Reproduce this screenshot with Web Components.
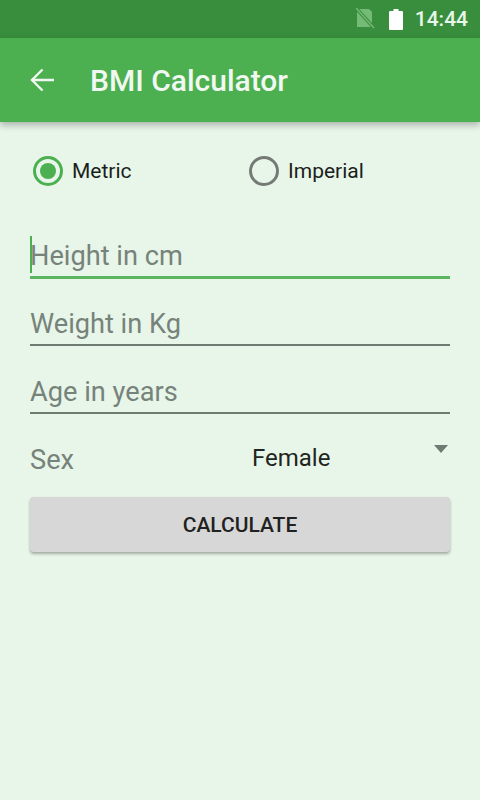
<!DOCTYPE html>
<html>
<head>
<meta charset="utf-8">
<style>
html, body { margin: 0; padding: 0; height: 800px; overflow: hidden; background: #e8f5e9; font-family: Roboto, sans-serif; }
</style>
</head>
<body>
<status-bar></status-bar>
<app-bar title="BMI Calculator"></app-bar>
<main-form>
  <unit-radios></unit-radios>
  <text-line hint="Height in cm" focused></text-line>
  <text-line hint="Weight in Kg"></text-line>
  <text-line hint="Age in years"></text-line>
  <sex-spinner></sex-spinner>
  <raised-button>CALCULATE</raised-button>
</main-form>

<script>
class StatusBar extends HTMLElement {
    constructor(){
        super();
        this.attachShadow({mode: "open"}).innerHTML = `
        <style>
        :host{
            display: flex;
            height: 38px;
            background: #388e3c;
            align-items: center;
            justify-content: flex-end;
            padding-right: 12px;
            box-sizing: border-box;
            color: #e8f5e9;
            font: 500 21px Roboto, sans-serif;
        }
        svg { display: block; }
        .sim { margin-right: 13px; }
        .bat { margin-right: 12px; }
        </style>
        <svg class="sim" width="20" height="22" viewBox="0 0 20 22">
            <path d="M1 1h12l3 3v15H1z" fill="#74bb78"/>
            <path d="M0 0l18 20" stroke="#388e3c" stroke-width="3.400"/>
            <path d="M0 0l18 20" stroke="#74bb78" stroke-width="1.500"/>
        </svg>
        <svg class="bat" width="14" height="22" viewBox="0 0 14 22">
            <path d="M4.500 1h5v2H13a1 1 0 0 1 1 1v17a1 1 0 0 1-1 1H1a1 1 0 0 1-1-1V4a1 1 0 0 1 1-1h3.500z" fill="#fff"/>
        </svg>
        <span>14:44</span>
        `;
    }
}

class AppBar extends HTMLElement {
    constructor(){
        super();
        this.attachShadow({mode: "open"}).innerHTML = `
        <style>
        :host{
            display: flex;
            position: relative;
            z-index: 1;
            height: 84px;
            background: #4caf50;
            align-items: center;
            color: #f1f8f1;
            box-shadow: 0 3px 7px rgba(0, 0, 0, 0.28);
        }
        svg { display: block; margin-left: 30px; margin-right: 36px; }
        h1 { margin: 0; font: 500 30px Roboto, sans-serif; }
        </style>
        <svg width="24" height="24" viewBox="0 0 24 24" fill="none" stroke="#f1f8f1" stroke-width="2.400">
            <path d="M24 12H2.500M12.500 1.500L2 12l10.500 10.500"/>
        </svg>
        <h1></h1>
        `;
    }

    connectedCallback() {
        this.shadowRoot.querySelector("h1").textContent = this.getAttribute("title");
    }
}

class MainForm extends HTMLElement {
    constructor(){
        super();
        this.attachShadow({mode: "open"}).innerHTML = `
        <style>
        :host{
            display: block;
            padding: 27px 30px 0;
        }
        </style>
        <slot></slot>
        `;
    }
}

class UnitRadios extends HTMLElement {
    constructor(){
        super();
        this.attachShadow({mode: "open"}).innerHTML = `
        <style>
        :host{
            display: grid;
            grid-template-columns: 216px 1fr;
            padding-left: 3px;
            height: 44px;
            margin-bottom: 42px;
            align-items: center;
            font: 400 21px Roboto, sans-serif;
            color: #1a1f1b;
        }
        .opt { display: flex; align-items: center; gap: 9px; }
        svg { display: block; }
        </style>
        <div class="opt">
            <svg width="30" height="30" viewBox="0 0 30 30">
                <circle cx="15" cy="15" r="13.500" fill="none" stroke="#4caf50" stroke-width="3"/>
                <circle cx="15" cy="15" r="8" fill="#4caf50"/>
            </svg>
            <span>Metric</span>
        </div>
        <div class="opt">
            <svg width="30" height="30" viewBox="0 0 30 30">
                <circle cx="15" cy="15" r="13.500" fill="none" stroke="#757a76" stroke-width="3"/>
            </svg>
            <span>Imperial</span>
        </div>
        `;
    }
}

class TextLine extends HTMLElement {
    constructor(){
        super();
        this.attachShadow({mode: "open"}).innerHTML = `
        <style>
        :host{
            display: block;
            position: relative;
            height: 41px;
            margin-bottom: 25px;
            border-bottom: 2px solid #6f7a72;
            box-sizing: content-box;
            font: 400 27.2px/42px Roboto, sans-serif;
            color: #76837a;
        }
        :host([focused]) {
            border-bottom: 3px solid #5cb660;
            margin-bottom: 24px;
        }
        .caret {
            display: none;
            position: absolute;
            left: 0;
            top: 1px;
            width: 2px;
            height: 37px;
            background: #4caf50;
        }
        :host([focused]) .caret { display: block; }
        </style>
        <span class="caret"></span><span class="hint"></span>
        `;
    }

    connectedCallback() {
        this.shadowRoot.querySelector(".hint").textContent = this.getAttribute("hint");
    }
}

class SexSpinner extends HTMLElement {
    constructor(){
        super();
        this.attachShadow({mode: "open"}).innerHTML = `
        <style>
        :host{
            display: grid;
            grid-template-columns: 222px 1fr auto;
            height: 42px;
            margin-top: -4px;
            font-family: Roboto, sans-serif;
        }
        .label { font-size: 27.2px; line-height: 42px; color: #76837a; padding-top: 4px; }
        .value { font-size: 24px; line-height: 42px; color: #1f2621; padding-top: 2px; }
        .arrow {
            width: 0;
            height: 0;
            margin: 10px 2px 0 0;
            border-left: 7px solid transparent;
            border-right: 7px solid transparent;
            border-top: 8px solid #6f7a72;
        }
        </style>
        <span class="label">Sex</span>
        <span class="value">Female</span>
        <span class="arrow"></span>
        `;
    }
}

class RaisedButton extends HTMLElement {
    constructor(){
        super();
        this.attachShadow({mode: "open"}).innerHTML = `
        <style>
        :host{
            display: flex;
            height: 55px;
            margin-top: 20px;
            align-items: center;
            justify-content: center;
            background: #d6d7d6;
            border-radius: 4px;
            box-shadow: 0 2px 3px rgba(0, 0, 0, 0.3);
            font: 500 21px Roboto, sans-serif;
            color: #212121;
        }
        </style>
        <slot></slot>
        `;
    }
}

customElements.define("status-bar", StatusBar);
customElements.define("app-bar", AppBar);
customElements.define("main-form", MainForm);
customElements.define("unit-radios", UnitRadios);
customElements.define("text-line", TextLine);
customElements.define("sex-spinner", SexSpinner);
customElements.define("raised-button", RaisedButton);
</script>
</body>
</html>
